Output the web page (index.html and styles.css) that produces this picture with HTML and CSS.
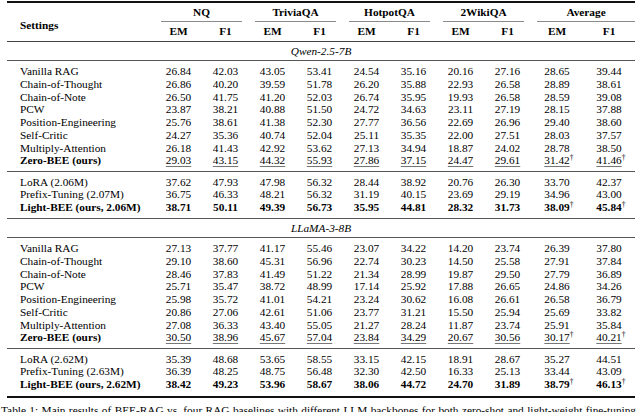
FILE: index.html
```html
<!DOCTYPE html>
<html lang="en">
<head>
<meta charset="utf-8">
<title>Table 1</title>
<link rel="stylesheet" href="styles.css">
</head>
<body>
<div class="page">
<table class="results">
  <colgroup>
    <col class="c-set">
    <col class="c-num"><col class="c-num"><col class="c-num"><col class="c-num">
    <col class="c-num"><col class="c-num"><col class="c-num"><col class="c-num">
    <col class="c-avg"><col class="c-avg">
  </colgroup>
  <thead>
    <tr class="grp">
      <th rowspan="2" class="set">Settings</th>
      <th colspan="2"><div class="cmid">NQ</div></th>
      <th colspan="2"><div class="cmid">TriviaQA</div></th>
      <th colspan="2"><div class="cmid">HotpotQA</div></th>
      <th colspan="2"><div class="cmid">2WikiQA</div></th>
      <th colspan="2"><div class="cmid last">Average</div></th>
    </tr>
    <tr class="met">
      <th>EM</th><th>F1</th><th>EM</th><th>F1</th><th>EM</th><th>F1</th><th>EM</th><th>F1</th><th>EM</th><th>F1</th>
    </tr>
  </thead>
  <tbody class="model">
    <tr><td colspan="11">Qwen-2.5-7B</td></tr>
  </tbody>
  <tbody class="sec">
    <tr><td>Vanilla RAG</td><td>26.84</td><td>42.03</td><td>43.05</td><td>53.41</td><td>24.54</td><td>35.16</td><td>20.16</td><td>27.16</td><td>28.65</td><td>39.44</td></tr>
    <tr><td>Chain-of-Thought</td><td>26.86</td><td>40.20</td><td>39.59</td><td>51.78</td><td>26.20</td><td>35.88</td><td>22.93</td><td>26.58</td><td>28.89</td><td>38.61</td></tr>
    <tr><td>Chain-of-Note</td><td>26.50</td><td>41.75</td><td>41.20</td><td>52.03</td><td>26.74</td><td>35.95</td><td>19.93</td><td>26.58</td><td>28.59</td><td>39.08</td></tr>
    <tr><td>PCW</td><td>23.87</td><td>38.21</td><td>40.88</td><td>51.50</td><td>24.72</td><td>34.63</td><td>23.11</td><td>27.19</td><td>28.15</td><td>37.88</td></tr>
    <tr><td>Position-Engineering</td><td>25.76</td><td>38.61</td><td>41.38</td><td>52.30</td><td>27.77</td><td>36.56</td><td>22.69</td><td>26.96</td><td>29.40</td><td>38.60</td></tr>
    <tr><td>Self-Critic</td><td>24.27</td><td>35.36</td><td>40.74</td><td>52.04</td><td>25.11</td><td>35.35</td><td>22.00</td><td>27.51</td><td>28.03</td><td>37.57</td></tr>
    <tr><td>Multiply-Attention</td><td>26.18</td><td>41.43</td><td>42.92</td><td>53.62</td><td>27.13</td><td>34.94</td><td>18.87</td><td>24.02</td><td>28.78</td><td>38.50</td></tr>
    <tr class="ours"><td>Zero-BEE (ours)</td><td><span class="u">29.03</span></td><td><span class="u">43.15</span></td><td><span class="u">44.32</span></td><td><span class="u">55.93</span></td><td><span class="u">27.86</span></td><td><span class="u">37.15</span></td><td><span class="u">24.47</span></td><td><span class="u">29.61</span></td><td><span class="u">31.42<sup class="dg">†</sup></span></td><td><span class="u">41.46<sup class="dg">†</sup></span></td></tr>
  </tbody>
  <tbody class="sec">
    <tr><td>LoRA (2.06M)</td><td>37.62</td><td>47.93</td><td>47.98</td><td>56.32</td><td>28.44</td><td>38.92</td><td>20.76</td><td>26.30</td><td>33.70</td><td>42.37</td></tr>
    <tr><td>Prefix-Tuning (2.07M)</td><td>36.75</td><td>46.33</td><td>48.21</td><td>56.32</td><td>31.19</td><td>40.15</td><td>23.69</td><td>29.19</td><td>34.96</td><td>43.00</td></tr>
    <tr class="best"><td>Light-BEE (ours, 2.06M)</td><td>38.71</td><td>50.11</td><td>49.39</td><td>56.73</td><td>35.95</td><td>44.81</td><td>28.32</td><td>31.73</td><td>38.09<sup class="dg">†</sup></td><td>45.84<sup class="dg">†</sup></td></tr>
  </tbody>
  <tbody class="model">
    <tr><td colspan="11">LLaMA-3-8B</td></tr>
  </tbody>
  <tbody class="sec">
    <tr><td>Vanilla RAG</td><td>27.13</td><td>37.77</td><td>41.17</td><td>55.46</td><td>23.07</td><td>34.22</td><td>14.20</td><td>23.74</td><td>26.39</td><td>37.80</td></tr>
    <tr><td>Chain-of-Thought</td><td>29.10</td><td>38.60</td><td>45.31</td><td>56.96</td><td>22.74</td><td>30.23</td><td>14.50</td><td>25.58</td><td>27.91</td><td>37.84</td></tr>
    <tr><td>Chain-of-Note</td><td>28.46</td><td>37.83</td><td>41.49</td><td>51.22</td><td>21.34</td><td>28.99</td><td>19.87</td><td>29.50</td><td>27.79</td><td>36.89</td></tr>
    <tr><td>PCW</td><td>25.71</td><td>35.47</td><td>38.72</td><td>48.99</td><td>17.14</td><td>25.92</td><td>17.88</td><td>26.65</td><td>24.86</td><td>34.26</td></tr>
    <tr><td>Position-Engineering</td><td>25.98</td><td>35.72</td><td>41.01</td><td>54.21</td><td>23.24</td><td>30.62</td><td>16.08</td><td>26.61</td><td>26.58</td><td>36.79</td></tr>
    <tr><td>Self-Critic</td><td>20.86</td><td>27.06</td><td>42.61</td><td>51.06</td><td>23.77</td><td>31.21</td><td>15.50</td><td>25.94</td><td>25.69</td><td>33.82</td></tr>
    <tr><td>Multiply-Attention</td><td>27.08</td><td>36.33</td><td>43.40</td><td>55.05</td><td>21.27</td><td>28.24</td><td>11.87</td><td>23.74</td><td>25.91</td><td>35.84</td></tr>
    <tr class="ours"><td>Zero-BEE (ours)</td><td><span class="u">30.50</span></td><td><span class="u">38.96</span></td><td><span class="u">45.67</span></td><td><span class="u">57.04</span></td><td><span class="u">23.84</span></td><td><span class="u">34.29</span></td><td><span class="u">20.67</span></td><td><span class="u">30.56</span></td><td><span class="u">30.17<sup class="dg">†</sup></span></td><td><span class="u">40.21<sup class="dg">†</sup></span></td></tr>
  </tbody>
  <tbody class="sec final">
    <tr><td>LoRA (2.62M)</td><td>35.39</td><td>48.68</td><td>53.65</td><td>58.55</td><td>33.15</td><td>42.15</td><td>18.91</td><td>28.67</td><td>35.27</td><td>44.51</td></tr>
    <tr><td>Prefix-Tuning (2.63M)</td><td>36.39</td><td>48.25</td><td>48.75</td><td>56.48</td><td>32.30</td><td>42.50</td><td>16.33</td><td>25.13</td><td>33.44</td><td>43.09</td></tr>
    <tr class="best"><td>Light-BEE (ours, 2.62M)</td><td>38.42</td><td>49.23</td><td>53.96</td><td>58.67</td><td>38.06</td><td>44.72</td><td>24.70</td><td>31.89</td><td>38.79<sup class="dg">†</sup></td><td>46.13<sup class="dg">†</sup></td></tr>
  </tbody>
</table>
</div>
<p class="caption">Table 1: Main results of BEE-RAG vs. four RAG baselines with different LLM backbones for both zero-shot and light-weight fine-tuning settings.</p>
</body>
</html>
```

FILE: styles.css
```css
html, body {
  margin: 0;
  padding: 0;
  background: #ffffff;
}

body {
  font-family: "Liberation Serif", "Times New Roman", serif;
  font-size: 11.3px;
  line-height: 12.7px;
  color: #000;
}

.page {
  padding: 1px 5px 0 7px;
}

.results {
  width: 628px;
  table-layout: fixed;
  border-collapse: separate;
  border-spacing: 0;
  border-top: 2px solid #111;
  border-bottom: 2px solid #111;
}

.c-set { width: 148px; }
.c-num { width: 47px; }
.c-avg { width: 52px; }

.results th,
.results td {
  padding: 0;
  text-align: center;
  white-space: nowrap;
  line-height: 12.7px;
}

.results th {
  font-weight: bold;
}

.results th.set {
  text-align: left;
  padding: 6px 0 0 13px;
  vertical-align: middle;
  border-bottom: 1px solid #444;
}

.cmid {
  margin: 0 7px 0 6px;
  padding: 2.7px 0;
  border-bottom: 1px solid #8a8a8a;
}

.cmid.last {
  margin-right: 0;
}

.met th {
  padding: 3px 0;
  border-bottom: 1px solid #444;
}

.model td {
  font-style: italic;
  text-align: center;
  padding: 3px 0;
  border-bottom: 1px solid #555;
}

.sec td:first-child {
  text-align: left;
  padding-left: 13px;
}

.sec tr:first-child td {
  padding-top: 3.9px;
}

.sec tr:last-child td {
  padding-bottom: 3.9px;
  border-bottom: 1px solid #555;
}

.sec.final tr:last-child td {
  padding-bottom: 5.5px;
  border-bottom: 0;
}

.ours td:first-child,
.best td {
  font-weight: bold;
}

.u {
  text-decoration: underline;
  text-decoration-color: #777;
  text-decoration-thickness: 1px;
  text-underline-offset: 2px;
}

.dg {
  display: inline-block;
  width: 0;
  font-size: 7.5px;
  line-height: 0;
  vertical-align: 4px;
  font-weight: normal;
}

.caption {
  margin: 6px 4px 0 1px;
  font-size: 11.3px;
  line-height: 12.7px;
  text-align: justify;
}
```
